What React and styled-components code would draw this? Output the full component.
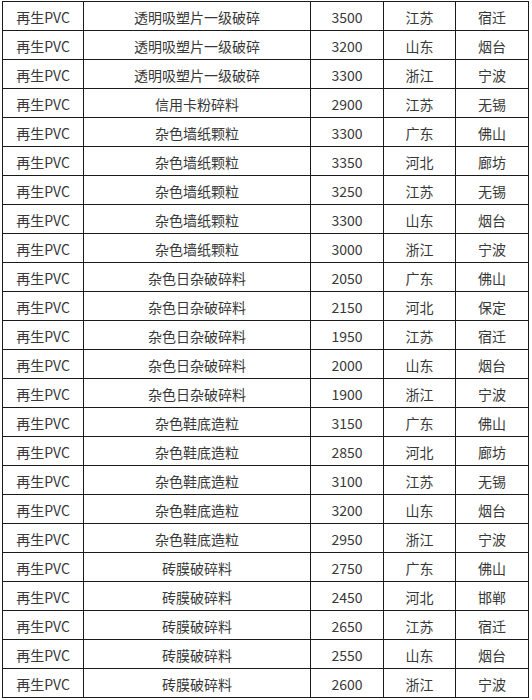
import React from "react";
import styled, { createGlobalStyle } from "styled-components";

const Global = createGlobalStyle`
  html, body { margin: 0; padding: 0; background: #fff; }
  body { padding: 1px 0 0 2px; }
`;

const rows = [
  ["透明吸塑片一级破碎", "3500", "江苏", "宿迁"],
  ["透明吸塑片一级破碎", "3200", "山东", "烟台"],
  ["透明吸塑片一级破碎", "3300", "浙江", "宁波"],
  ["信用卡粉碎料", "2900", "江苏", "无锡"],
  ["杂色墙纸颗粒", "3300", "广东", "佛山"],
  ["杂色墙纸颗粒", "3350", "河北", "廊坊"],
  ["杂色墙纸颗粒", "3250", "江苏", "无锡"],
  ["杂色墙纸颗粒", "3300", "山东", "烟台"],
  ["杂色墙纸颗粒", "3000", "浙江", "宁波"],
  ["杂色日杂破碎料", "2050", "广东", "佛山"],
  ["杂色日杂破碎料", "2150", "河北", "保定"],
  ["杂色日杂破碎料", "1950", "江苏", "宿迁"],
  ["杂色日杂破碎料", "2000", "山东", "烟台"],
  ["杂色日杂破碎料", "1900", "浙江", "宁波"],
  ["杂色鞋底造粒", "3150", "广东", "佛山"],
  ["杂色鞋底造粒", "2850", "河北", "廊坊"],
  ["杂色鞋底造粒", "3100", "江苏", "无锡"],
  ["杂色鞋底造粒", "3200", "山东", "烟台"],
  ["杂色鞋底造粒", "2950", "浙江", "宁波"],
  ["砖膜破碎料", "2750", "广东", "佛山"],
  ["砖膜破碎料", "2450", "河北", "邯郸"],
  ["砖膜破碎料", "2650", "江苏", "宿迁"],
  ["砖膜破碎料", "2550", "山东", "烟台"],
  ["砖膜破碎料", "2600", "浙江", "宁波"],
];

const Table = styled.div`
  display: grid;
  grid-template-columns: 81px 227px 73px 72px 73px;
  width: max-content;
  border-left: 1px solid #1a1a1a;
  border-top: 1px solid #1a1a1a;
  font-family: "Noto Sans CJK SC", "Microsoft YaHei", sans-serif;
  font-size: 14px;
  color: #383838;
`;

const Cell = styled.div`
  box-sizing: border-box;
  height: 29px;
  display: flex;
  align-items: center;
  justify-content: center;
  border-right: 1px solid #1a1a1a;
  border-bottom: 1px solid #1a1a1a;
  white-space: nowrap;
  line-height: 1;
  padding-top: 1px;
`;

export default function App() {
  return (
    <>
      <Global />
      <Table>
        {rows.map((r, i) => (
          <React.Fragment key={i}>
            <Cell>再生PVC</Cell>
            <Cell>{r[0]}</Cell>
            <Cell>{r[1]}</Cell>
            <Cell>{r[2]}</Cell>
            <Cell>{r[3]}</Cell>
          </React.Fragment>
        ))}
      </Table>
    </>
  );
}
